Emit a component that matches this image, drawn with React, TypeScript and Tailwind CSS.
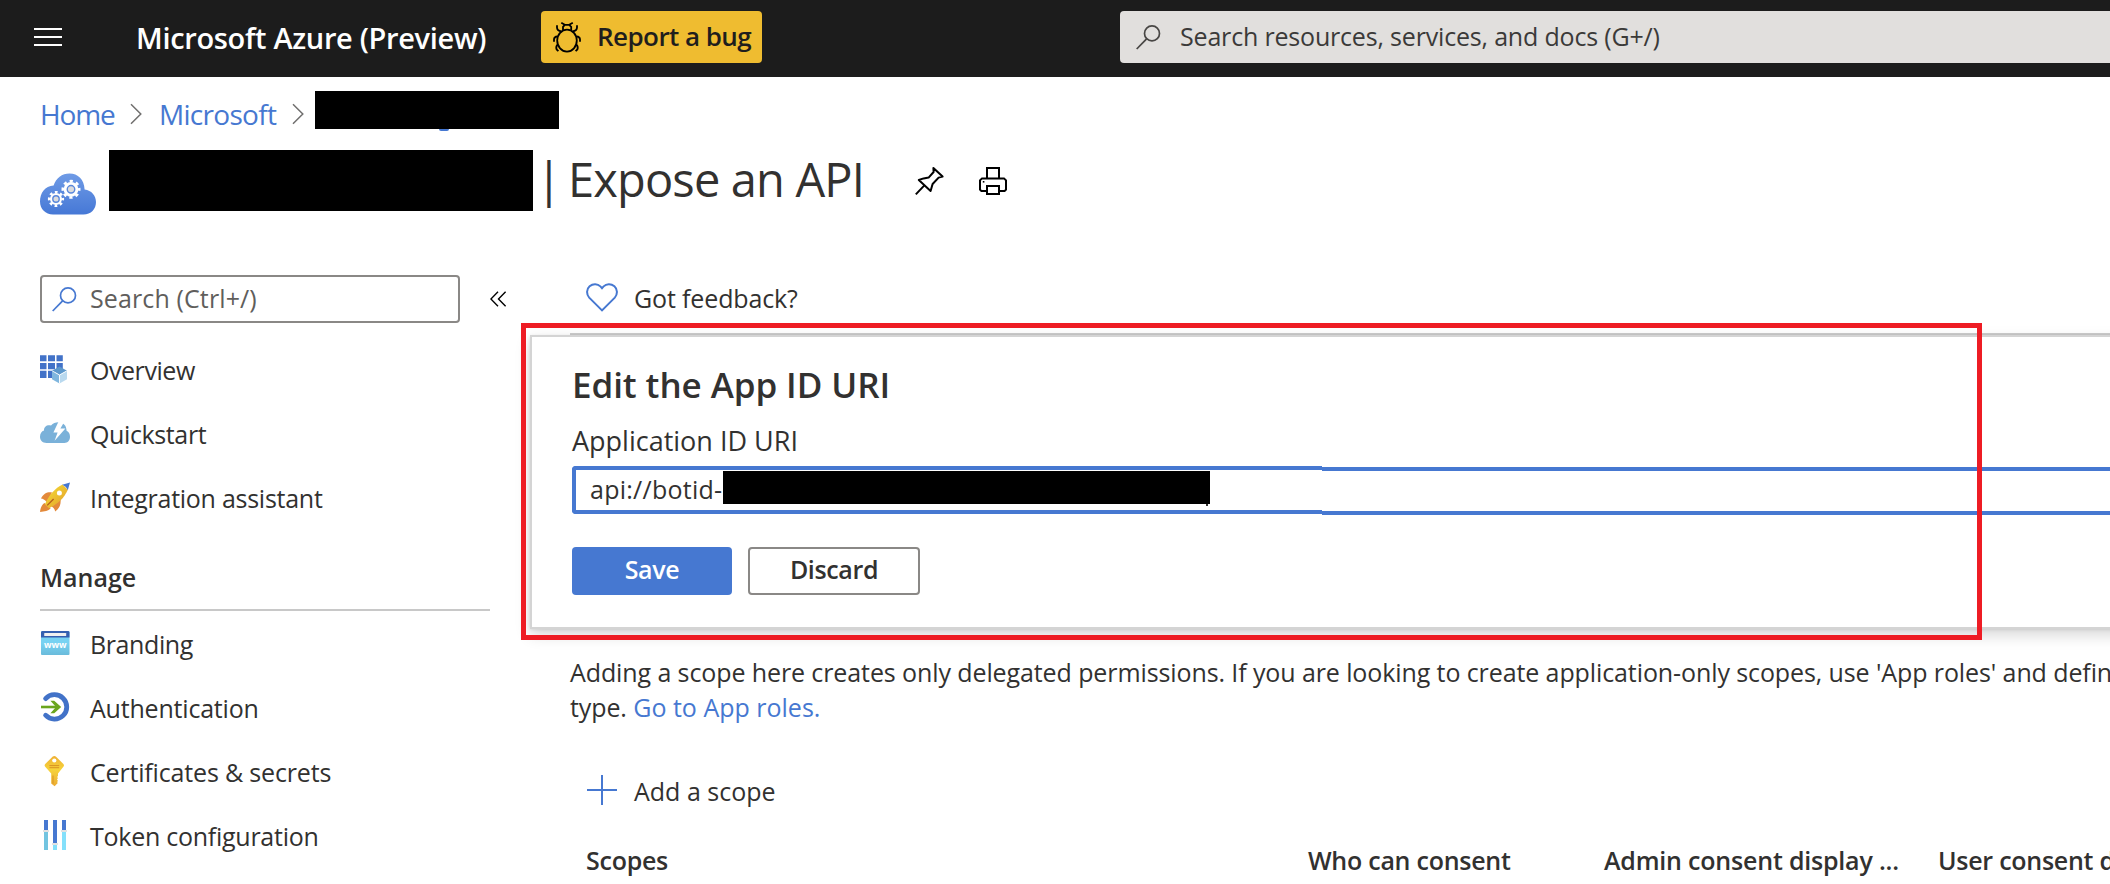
import React from "react";

function SearchGlyph({ className }: { className: string }) {
  return (
    <svg className={className} width="25" height="25" viewBox="0 0 25 25" fill="none" stroke="currentColor" strokeWidth="1.7">
      <circle cx="16" cy="8.4" r="7.5" />
      <path d="M10.6 13.8L.7 24" />
    </svg>
  );
}

function BugIcon() {
  return (
    <svg width="30" height="34" viewBox="0 0 30 34" fill="none" stroke="#000" strokeWidth="1.8">
      <ellipse cx="15" cy="20.6" rx="9.8" ry="11" />
      <path d="M11 10V6.8L12.8 4.8H17.2L19.2 6.8V10" />
      <path d="M9.3 2.8L12.8 4.8M20.8 2.8L17.2 4.8" />
      <path d="M5 5.2V7.6C5 9.8 6.4 11 9.4 11.4M25 5.2V7.6C25 9.8 23.6 11 20.6 11.4" />
      <path d="M2 21.8V19.4C2 17.6 3 16.6 5.6 16.4M28 21.8V19.4C28 17.6 27 16.6 24.4 16.4" />
      <path d="M5.6 24.6C4.3 26 4 28 4.6 29.4L6.4 31.2M24.4 24.6C25.7 26 26 28 25.4 29.4L23.6 31.2" />
    </svg>
  );
}

function Crumb({ className }: { className: string }) {
  return (
    <svg className={className} width="12" height="22" viewBox="0 0 12 22" fill="none" stroke="#706f6e" strokeWidth="1.5">
      <path d="M1 1.2L10.8 11L1 20.8" />
    </svg>
  );
}

function Gear({ cx, cy, r }: { cx: number; cy: number; r: number }) {
  const step = (2 * Math.PI * (r - 1.2)) / 16;
  return (
    <g>
      <circle cx={cx} cy={cy} r={r - 2} fill="#fff" />
      <circle cx={cx} cy={cy} r={r - 1.2} fill="none" stroke="#fff" strokeWidth="2.6" strokeDasharray={step} strokeDashoffset={step / 2} />
      <circle cx={cx} cy={cy} r={r * 0.4} fill="#dcdcdc" stroke="#5a88dc" strokeWidth="1.4" />
    </g>
  );
}

function AppCloud() {
  return (
    <svg width="56" height="42" viewBox="0 0 56 42">
      <defs>
        <linearGradient id="cloud" x1="0" y1="0" x2="0" y2="1">
          <stop offset="0" stopColor="#6f9be6" />
          <stop offset="1" stopColor="#4678d6" />
        </linearGradient>
      </defs>
      <path fill="url(#cloud)" d="M13 41.5C5.5 41.5 0 36 0 28.5C0 20 5 13 13.6 12.5C16 5 22 .4 29.5 .4C38 .4 44.3 6.5 44.6 16.4C51.5 17.2 56 22.4 56 29C56 36 51 41.5 43.5 41.5Z" />
      <Gear cx={31} cy={16.3} r={9.4} />
      <Gear cx={16} cy={26} r={8} />
    </svg>
  );
}

function PinIcon() {
  return (
    <svg width="30" height="30" viewBox="0 0 30 30" fill="none" stroke="#000" strokeWidth="2" strokeLinejoin="round">
      <path d="M18.4 2L27.6 10.6L23.6 11.6L17.6 18L15.6 25L3.8 14L8.6 12.4L13.6 11.6L18.6 6Z" />
      <path d="M9.4 19.4L.8 28.4" />
    </svg>
  );
}

function PrintIcon() {
  return (
    <svg width="30" height="30" viewBox="0 0 30 30" fill="none" stroke="#000" strokeWidth="2">
      <path d="M9 12V2H21V12" />
      <path d="M9 25H3.4L2 23.6V14.4L4 12.4H26L28 14.4V23.6L26.6 25H21" />
      <path d="M9 20H21V28H9Z" />
      <rect x="4.8" y="15" width="1.6" height="1.6" fill="#000" stroke="none" />
    </svg>
  );
}

function OverviewIcon() {
  return (
    <svg width="32" height="32" viewBox="0 0 32 32">
      <path fill="#4272c8" d="M0 1.3H6.5V7.3H0ZM8 1.3H15V7.3H8ZM16.5 1.3H22.8V7.3H16.5ZM0 9H6.5V15.2H0ZM8 9H15V15.2H8ZM16.5 9H22.8V15.2H16.5ZM0 16.8H6.5V24H0ZM8 16.8H15V24H8Z" />
      <path fill="#5c98cc" d="M19.5 12.6L27 16.8L19.5 21L12 16.8Z" />
      <path fill="#7fb6de" d="M12 16.8L19.5 21V29.4L12 25.2Z" />
      <path fill="#b9d9ef" d="M27 16.8L19.5 21V29.4L27 25.2Z" />
      <path stroke="#fff" strokeWidth=".9" fill="none" d="M12.4 17L19.5 21V29.4M19.5 21L26.6 17" />
    </svg>
  );
}

function QuickstartIcon() {
  return (
    <svg width="32" height="32" viewBox="0 0 32 32">
      <path fill="#7ab1d9" d="M6.5 25C2.5 25 0 22.4 0 18.8C0 15.4 1.6 13.2 4 12.4C3.8 8.4 7.2 6.4 11 7.4C13 5.2 15.5 4.4 18.5 4.3C23.6 4.6 26.4 7.6 26.6 12.8C28.8 13.8 30 16 30 18.8C30 22.4 27.8 25 24.4 25Z" />
      <path fill="#fff" d="M18.8 3L13.4 14.4H17.6L14.6 22.8L25.4 10.6H20.4L24 4.2Z" />
    </svg>
  );
}

function RocketIcon() {
  return (
    <svg width="32" height="32" viewBox="0 0 32 32">
      <defs>
        <linearGradient id="hull" x1="0" y1="0" x2="1" y2="1">
          <stop offset=".2" stopColor="#f2d433" />
          <stop offset=".8" stopColor="#e6a92c" />
        </linearGradient>
      </defs>
      <path fill="#e3893a" d="M1 16.6C3.4 11.6 7 9.8 12 10.4L7 20.4C4.6 17.6 3 16.8 1 16.6ZM20.6 17.4C21 22.6 19.6 26.4 15.2 29.4C14.6 27 13.6 25.6 11.6 24.4ZM4.6 21C2 22.4 .4 25.6 0 30C4.6 29.8 8.4 28.8 10.6 26.6Z" />
      <path fill="url(#hull)" d="M22.6 2.6C15 6.4 9 13 5 22.2L9 26.2C18 22 24.6 15.6 27.8 7.8Z" />
      <path fill="#4678d1" d="M22.2 2.8L30 .6L27.8 8.2C26.6 5.6 24.8 3.8 22.2 2.8Z" />
      <circle cx="19.4" cy="11" r="2.5" fill="#fff" />
      <path stroke="#b55d1c" strokeWidth="1.3" d="M7.2 23.4L13.6 17" />
    </svg>
  );
}

function BrandingIcon() {
  return (
    <svg width="32" height="32" viewBox="0 0 32 32">
      <defs>
        <linearGradient id="page" x1="0" y1="0" x2="0" y2="1">
          <stop offset=".5" stopColor="#78d2f2" />
          <stop offset="1" stopColor="#6abbdb" />
        </linearGradient>
      </defs>
      <rect x="1" y="3" width="28.5" height="24" rx="1" fill="url(#page)" />
      <path fill="#3560b0" d="M2 3H28.5L29.5 4V9.4H1V4Z" />
      <rect x="4.2" y="5" width="22" height="3" rx=".6" fill="#f0f0f0" />
      <text x="15.2" y="20" textAnchor="middle" fill="#fff" fontSize="8.8" fontWeight="700" fontFamily="Open Sans" textLength="22.6">www</text>
    </svg>
  );
}

function AuthIcon() {
  return (
    <svg width="32" height="32" viewBox="0 0 32 32" fill="none">
      <path stroke="#4272c8" strokeWidth="4.8" strokeLinecap="round" d="M5.6 6.6A12.2 12.2 0 1 1 5.6 23.2" />
      <path stroke="#6aa51d" strokeWidth="2.6" d="M1 15H18.5" />
      <path fill="#6aa51d" d="M10.4 8.8H14.2L21.2 15L14.2 21.2H10.4L16 15Z" />
    </svg>
  );
}

function KeyIcon() {
  return (
    <svg width="32" height="32" viewBox="0 0 32 32">
      <defs>
        <linearGradient id="key" x1="0" y1="0" x2="0" y2="1">
          <stop offset="0" stopColor="#efb034" />
          <stop offset=".45" stopColor="#f6d33a" />
          <stop offset="1" stopColor="#ebab34" />
        </linearGradient>
      </defs>
      <path fill="url(#key)" d="M12.8 .6Q14.3 -.6 15.8 .6L23.4 8Q24.6 9.3 23.4 10.8L18 17.4V20L17 21L18 22L17 23.4L18 25L17 26L17.8 27L14.6 30.2L11.2 27.4V17.6L5.2 10.8Q4 9.3 5.2 8Z" />
      <circle cx="14.3" cy="4.5" r="2.1" fill="#fff" />
      <path stroke="#d99223" strokeWidth="1" d="M9.4 9.6H19.2M9.4 11.7H19.2M13 19.5V27.6" />
    </svg>
  );
}

function TokenIcon() {
  return (
    <svg width="32" height="32" viewBox="0 0 32 32">
      <path fill="#84e0fb" d="M13 23H17V30H13ZM22 10H26V30H22Z" />
      <path fill="#72c4e0" d="M4 10H8V30H4Z" />
      <path fill="#4678d1" d="M4 0H8V10.4H4ZM13 0H17V23.2H13ZM22 0H26V10.4H22Z" />
      <path fill="#e2e2e2" d="M3 10H9V12H3ZM12 23H18V25H12ZM21 10H27V12H21Z" />
    </svg>
  );
}

function NavItem({ icon, children }: { icon: React.ReactNode; children: React.ReactNode }) {
  return (
    <li className="flex h-16 items-center">
      <span className="w-[50px] shrink-0">{icon}</span>
      {children}
    </li>
  );
}

export default function App() {
  return (
    <div className="relative flex h-[884px] w-[2110px] flex-col overflow-hidden bg-white font-['Open_Sans',sans-serif] text-[25px] leading-[30px] whitespace-nowrap text-[#323130]">
      <header className="flex h-[77px] shrink-0 items-start bg-[#1c1c1c]">
        <div className="mt-7 ml-[34px] flex w-7 flex-col gap-1.5">
          <span className="h-0.5 bg-white" />
          <span className="h-0.5 bg-white" />
          <span className="h-0.5 bg-white" />
        </div>
        <div className="mt-[23px] ml-[74px] w-[405px] text-[29px] font-semibold tracking-[-0.33px] text-white">Microsoft Azure (Preview)</div>
        <button className="mt-[11px] flex h-[52px] w-[221px] items-center rounded bg-[#efbc30] pl-[11px] text-[26px] font-semibold tracking-[-0.56px] text-[#1f1e1d]">
          <BugIcon />
          <span className="-mt-0.5 ml-[15px]">Report a bug</span>
        </button>
        <div className="mt-[11px] ml-[358px] flex h-[52px] flex-1 items-center rounded-l bg-[#e1dfdd] pl-4 tracking-[-0.18px] text-[#3b3a39]">
          <SearchGlyph className="text-[#484644]" />
          <span className="-mt-0.5 ml-[19px]">Search resources, services, and docs (G+/)</span>
        </div>
      </header>

      <nav className="flex h-[73px] shrink-0 items-start pl-10 text-[28px] text-[#4678d1]">
        <span className="mt-[22px] w-[90px] tracking-[-1.1px]">Home</span>
        <Crumb className="mt-[26px]" />
        <span className="mt-[22px] ml-[17px] w-[133px] tracking-[-0.7px]">Microsoft</span>
        <Crumb className="mt-[26px]" />
        <span className="relative mt-3.5 ml-[11px] h-[38px] w-[244px] bg-black">
          <span className="absolute top-[38px] left-[124px] h-0.5 w-2.5 rounded-b bg-[#4678d1]" />
        </span>
      </nav>

      <div className="flex h-[125px] shrink-0 items-start pl-10">
        <div className="mt-[23px]">
          <AppCloud />
        </div>
        <span className="ml-[13px] h-[61px] w-[424px] bg-black" />
        <h1 className="ml-[3px] flex text-[47px] leading-[58px]">
          <span className="w-8">|</span>
          <span className="w-[347px] tracking-[-0.85px]">Expose an API</span>
        </h1>
        <div className="mt-4">
          <PinIcon />
        </div>
        <div className="mt-4 ml-[33px]">
          <PrintIcon />
        </div>
      </div>

      <div className="flex flex-1">
        <aside className="w-[521px] shrink-0 pl-10">
          <div className="flex items-center">
            <div className="flex h-12 w-[420px] items-center rounded border-2 border-[#8a8886] pl-2.5 text-[#605e5c]">
              <SearchGlyph className="text-[#4678d1]" />
              <span className="-mt-0.5 ml-[13px] tracking-[0.12px]">Search (Ctrl+/)</span>
            </div>
            <svg className="ml-[30px]" width="17" height="16" viewBox="0 0 17 16" fill="none" stroke="#000" strokeWidth="1.4">
              <path d="M8 .8L.9 8L8 15.2M15.6 .8L8.5 8L15.6 15.2" />
            </svg>
          </div>
          <ul className="mt-[15px]">
            <NavItem icon={<OverviewIcon />}>
              <span className="tracking-[-0.45px]">Overview</span>
            </NavItem>
            <NavItem icon={<QuickstartIcon />}>
              <span className="tracking-[-0.38px]">Quickstart</span>
            </NavItem>
            <NavItem icon={<RocketIcon />}>
              <span className="tracking-[-0.26px]">Integration assistant</span>
            </NavItem>
          </ul>
          <h2 className="h-[81px] w-[450px] border-b-2 border-[#c8c8c8] pt-8 font-semibold">Manage</h2>
          <ul className="mt-px">
            <NavItem icon={<BrandingIcon />}>
              <span className="tracking-[-0.4px]">Branding</span>
            </NavItem>
            <NavItem icon={<AuthIcon />}>
              <span className="tracking-[-0.2px]">Authentication</span>
            </NavItem>
            <NavItem icon={<KeyIcon />}>
              <span className="tracking-[-0.17px]">Certificates &amp; secrets</span>
            </NavItem>
            <NavItem icon={<TokenIcon />}>
              <span className="tracking-[-0.26px]">Token configuration</span>
            </NavItem>
          </ul>
        </aside>

        <main className="min-w-0 flex-1">
          <div className="flex h-[58px] items-start pt-2 pl-[65px]">
            <svg width="32" height="29" viewBox="0 0 32 29" fill="none" stroke="#4678d1" strokeWidth="2">
              <path d="M16 27.4L3.2 14.6C.2 11.4 .4 6 3.6 3.2C7 .4 11.6 .6 14.4 3.4L16 5.2L17.6 3.4C20.4 .6 25 .4 28.4 3.2C31.6 6 31.8 11.4 28.8 14.6Z" />
            </svg>
            <span className="ml-4 tracking-[-0.14px]">Got feedback?</span>
          </div>
          <div className="ml-[49px] h-0.5 bg-[#cccccc]" />

          <section className="-mr-10 ml-[9px] h-[294px] border-y-2 border-l-2 border-[#d4d4d4] bg-white pt-6 pl-10 shadow-[0_6.4px_14.4px_rgba(0,0,0,0.16),0_1.2px_3.6px_rgba(0,0,0,0.12)]">
            <h2 className="text-[35px] leading-[48px] font-semibold tracking-[-0.08px]">Edit the App ID URI</h2>
            <label className="mt-[13px] block text-[27px] leading-[37px]">Application ID URI</label>
            <div className="mt-[7px] flex h-[49px] items-start">
              <div className="flex h-12 w-[750px] items-start rounded-l border-4 border-r-0 border-[#4678d1] pl-3.5">
                <span className="mt-1 w-[133px] tracking-[0.25px]">api://botid-</span>
                <span className="relative mt-px h-[33px] w-[487px] bg-black">
                  <span className="absolute top-[33px] right-0.5 h-0.5 w-0.5 bg-[#323130]" />
                </span>
              </div>
              <div className="mt-px h-12 flex-1 border-y-4 border-[#4678d1]" />
            </div>
            <div className="mt-8 flex gap-4 font-semibold tracking-[-0.36px]">
              <button className="h-12 w-40 rounded bg-[#4678d1] pb-1 text-white">Save</button>
              <button className="h-12 w-[172px] rounded border-2 border-[#8a8886] pb-1">Discard</button>
            </div>
          </section>

          <p className="mt-[26px] ml-[49px] leading-[35px] tracking-[-0.1px]">
            Adding a scope here creates only delegated permissions. If you are looking to create application-only scopes, use 'App roles' and define
            <br />
            type. <a className="tracking-normal text-[#4678d1]">Go to App roles.</a>
          </p>
          <div className="mt-[46px] flex h-10 items-center pl-[66px]">
            <svg className="-mt-0.5" width="30" height="30" viewBox="0 0 30 30" stroke="#4678d1" strokeWidth="2">
              <path d="M15 0V30M0 15H30" />
            </svg>
            <span className="ml-[17px]">Add a scope</span>
          </div>
          <div className="mt-[34px] grid grid-cols-[722px_296px_334px_1fr] pl-[65px] font-semibold tracking-[-0.26px]">
            <span>Scopes</span>
            <span>Who can consent</span>
            <span className="tracking-[-0.2px]">Admin consent display ...</span>
            <span>User consent display name</span>
          </div>
        </main>
      </div>

      <div className="pointer-events-none absolute top-[323px] left-[521px] h-[317px] w-[1461px] border-5 border-[#ee1c24]" />
    </div>
  );
}
